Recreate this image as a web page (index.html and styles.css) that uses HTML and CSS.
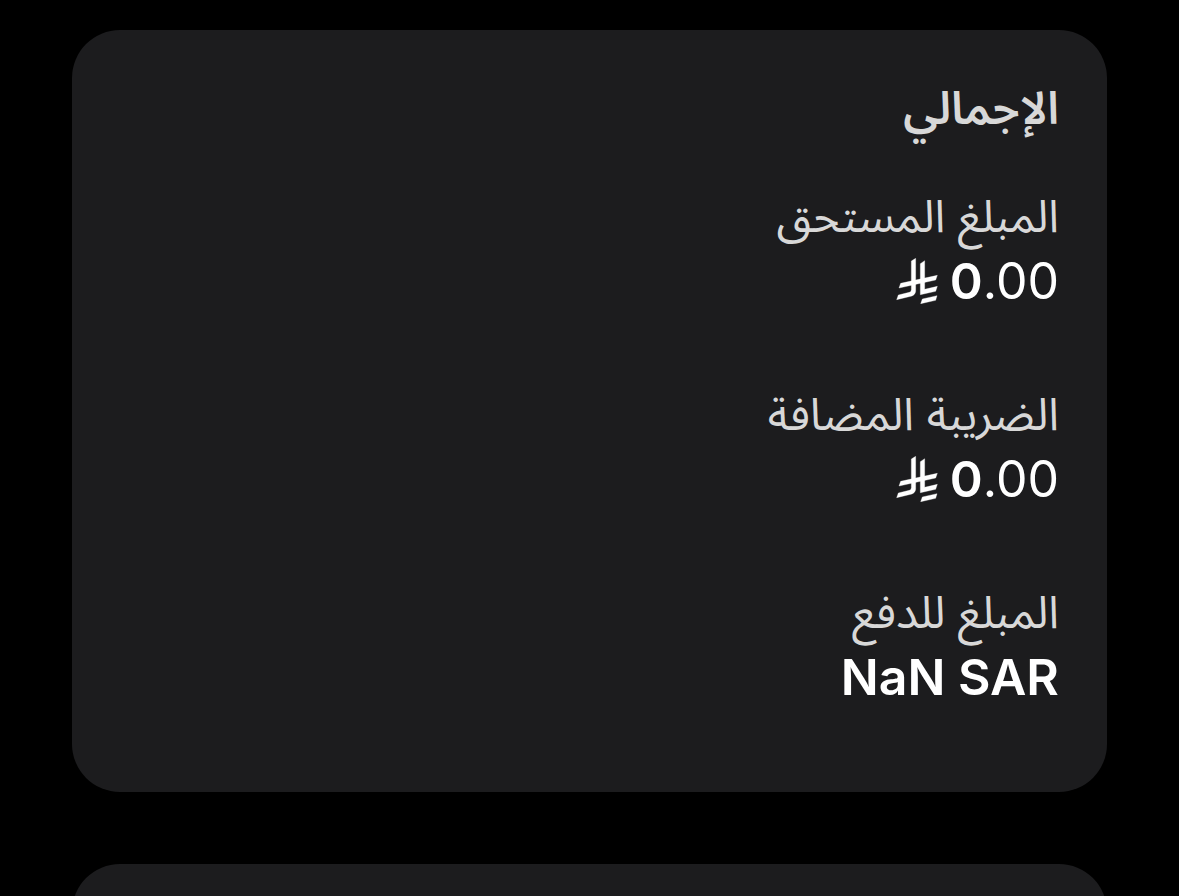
FILE: index.html
```html
<!DOCTYPE html>
<html lang="ar" dir="rtl">
<head>
  <meta charset="UTF-8">
  <meta name="viewport" content="width=device-width, initial-scale=1.0">
  <title>الإجمالي</title>
  <link rel="stylesheet" href="styles.css">
</head>
<body>
  <svg class="sprite" aria-hidden="true">
    <symbol id="riyal" viewBox="22 19 124 138">
      <path d="M67 28 80 20V119Q79 129 69 133L23 144 28 130 61 122Q67 121 67 114Z"/>
      <path d="M94 36 107 27V113L145 104 140 119 94 129Z"/>
      <path d="M35 95 145 71 140 85 30 109Z"/>
      <path d="M100 142 144 132 140 146 95 156Z"/>
    </symbol>
  </svg>
  <main class="page">
    <section class="card">
      <h2 class="card-title">الإجمالي</h2>
      <dl class="totals">
        <div class="total">
          <dt>المبلغ المستحق</dt>
          <dd dir="ltr"><svg class="riyal" role="img" aria-label="SAR"><use href="#riyal"/></svg><span class="amount"><b>0</b>.00</span></dd>
        </div>
        <div class="total">
          <dt>الضريبة المضافة</dt>
          <dd dir="ltr"><svg class="riyal" role="img" aria-label="SAR"><use href="#riyal"/></svg><span class="amount"><b>0</b>.00</span></dd>
        </div>
        <div class="total">
          <dt>المبلغ للدفع</dt>
          <dd dir="ltr"><b>NaN SAR</b></dd>
        </div>
      </dl>
    </section>
    <section class="card"></section>
  </main>
</body>
</html>
```

FILE: styles.css
```css
body {
  margin: 0;
  background: #000;
  color: #fff;
  font-family: Inter, "Noto Sans Arabic", "Noto Sans", "DejaVu Sans", sans-serif;
}
.sprite {
  display: none;
}
.page {
  display: flex;
  flex-direction: column;
  gap: 72px;
  padding: 30px 72px 0;
}
.card {
  padding: 48px;
  background: #1c1c1e;
  border-radius: 48px;
}
.card-title {
  margin: 0 0 48px;
  color: #d8d8d8;
  font-size: 45px;
  line-height: 60px;
  font-weight: 600;
}
.totals {
  display: flex;
  flex-direction: column;
  gap: 70px;
  margin: 0;
  padding-bottom: 34px;
}
.total dt {
  margin-bottom: 2px;
  color: #d8d8d8;
  font-size: 45px;
  line-height: 60px;
}
.total dd {
  display: flex;
  justify-content: flex-end;
  align-items: center;
  gap: 12px;
  margin: 0;
  font-size: 50px;
  line-height: 66px;
}
.total b {
  font-weight: 600;
}
.riyal {
  width: 42px;
  height: 46px;
  fill: #fff;
  stroke: #fff;
  stroke-width: 1px;
}
```
